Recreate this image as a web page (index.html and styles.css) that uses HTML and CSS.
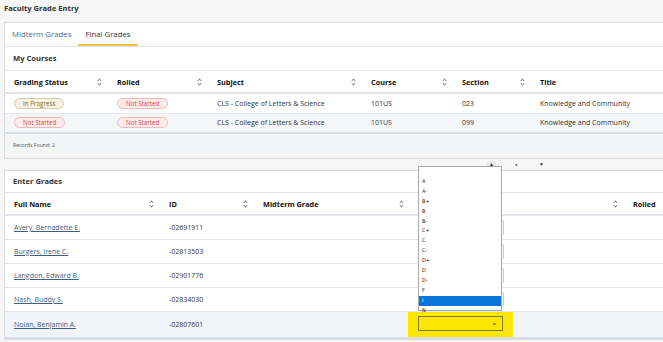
FILE: index.html
```html
<!DOCTYPE html>
<html lang="en">
  <head>
    <meta charset="UTF-8" />
    <meta name="viewport" content="width=device-width, initial-scale=1.0" />
    <title>Faculty Grade Entry</title>
    <link rel="stylesheet" href="styles.css">
  </head>
  <body>
    <div class="page">
      <h1 class="page-title">Faculty Grade Entry</h1>

      <div class="panel">
        <div class="tabs">
          <div class="tab">Midterm Grades</div>
          <div class="tab active">Final Grades</div>
        </div>

        <div class="panel-title">My Courses</div>

        <table class="grid courses">
          <colgroup>
            <col style="width: 103px" />
            <col style="width: 100px" />
            <col style="width: 154px" />
            <col style="width: 91px" />
            <col style="width: 78px" />
            <col />
          </colgroup>
          <thead>
            <tr>
              <th><span>Grading Status</span><i class="sort"></i></th>
              <th><span>Rolled</span><i class="sort"></i></th>
              <th><span>Subject</span><i class="sort"></i></th>
              <th><span>Course</span><i class="sort"></i></th>
              <th><span>Section</span><i class="sort"></i></th>
              <th><span>Title</span></th>
            </tr>
          </thead>
          <tbody>
            <tr>
              <td><span class="pill progress">In Progress</span></td>
              <td><span class="pill not-started">Not Started</span></td>
              <td>CLS - College of Letters &amp; Science</td>
              <td>101US</td>
              <td>023</td>
              <td>Knowledge and Community</td>
            </tr>
            <tr class="alt">
              <td><span class="pill not-started">Not Started</span></td>
              <td><span class="pill not-started">Not Started</span></td>
              <td>CLS - College of Letters &amp; Science</td>
              <td>101US</td>
              <td>099</td>
              <td>Knowledge and Community</td>
            </tr>
          </tbody>
        </table>

        <div class="records">Records Found: 2</div>
      </div>

      <div class="pager">
        <span class="pager-up">&#9650;</span>
        <span class="pager-dot">&#9679;</span>
        <span class="pager-down">&#9660;</span>
      </div>

      <div class="panel">
        <div class="panel-title short">Enter Grades</div>

        <table class="grid students">
          <colgroup>
            <col style="width: 155px" />
            <col style="width: 94px" />
            <col style="width: 156px" />
            <col style="width: 214px" />
            <col />
          </colgroup>
          <thead>
            <tr>
              <th><span>Full Name</span><i class="sort"></i></th>
              <th><span>ID</span><i class="sort"></i></th>
              <th><span>Midterm Grade</span><i class="sort"></i></th>
              <th><i class="sort"></i></th>
              <th><span>Rolled</span></th>
            </tr>
          </thead>
          <tbody>
            <tr>
              <td><a href="#">Avery, Bernadette E.</a></td>
              <td>-02691911</td>
              <td></td>
              <td><div class="grade-select"></div></td>
              <td></td>
            </tr>
            <tr>
              <td><a href="#">Burgers, Irene C.</a></td>
              <td>-02813503</td>
              <td></td>
              <td><div class="grade-select"></div></td>
              <td></td>
            </tr>
            <tr>
              <td><a href="#">Langdon, Edward B.</a></td>
              <td>-02901776</td>
              <td></td>
              <td><div class="grade-select"></div></td>
              <td></td>
            </tr>
            <tr>
              <td><a href="#">Nash, Buddy S.</a></td>
              <td>-02834030</td>
              <td></td>
              <td><div class="grade-select"></div></td>
              <td></td>
            </tr>
            <tr class="current">
              <td><a href="#">Nolan, Benjamin A.</a></td>
              <td>-02807601</td>
              <td></td>
              <td class="highlight-cell">
                <div class="highlight">
                  <div class="grade-select open"><span class="chev">&#8964;</span></div>
                </div>
              </td>
              <td></td>
            </tr>
          </tbody>
        </table>
      </div>

      <ul class="listbox">
        <li>A</li>
        <li>A-</li>
        <li>B+</li>
        <li>B</li>
        <li>B-</li>
        <li>C+</li>
        <li>C</li>
        <li>C-</li>
        <li>D+</li>
        <li>D</li>
        <li>D-</li>
        <li>F</li>
        <li class="selected">I</li>
        <li>N</li>
      </ul>
    </div>
  </body>
</html>
```

FILE: styles.css
```css
* {
  margin: 0;
  padding: 0;
  box-sizing: border-box;
}

html,
body {
  overflow: hidden;
}

body {
  font-family: 'Open Sans', 'Liberation Sans', sans-serif;
  font-size: 7px;
  color: #333;
  background: #f6f6f6;
}

.page {
  position: relative;
  width: 740px;
  padding: 0 0 0 4px;
}

.page-title {
  font-size: 7.6px;
  font-weight: 700;
  color: #333;
  height: 22px;
  line-height: 17px;
}

.panel {
  background: white;
  border: 1px solid #dcdcdc;
}

.tabs {
  display: flex;
  height: 24px;
  border-bottom: 1px solid #e4e4e4;
}

.tab {
  padding: 0 7px;
  line-height: 23px;
  font-size: 7.8px;
  color: #4d6a86;
}

.tab.active {
  color: #333;
  border-bottom: 2px solid #f0c34a;
}

.panel-title {
  height: 24px;
  line-height: 23px;
  padding-left: 8px;
  font-weight: 700;
  font-size: 7.6px;
  color: #333;
  border-bottom: 1px solid #e2e6ea;
}

.panel-title.short {
  height: 22px;
  line-height: 21px;
}

.grid {
  width: 100%;
  table-layout: fixed;
  border-collapse: collapse;
}

.grid th {
  text-align: left;
  font-weight: 700;
  font-size: 7.3px;
  color: #111;
  padding: 0 6px 0 9px;
  border-bottom: 2px solid #e2e6ee;
}

.grid th span {
  display: inline-block;
}

.grid td {
  padding: 0 6px 0 9px;
  color: #333;
  border-bottom: 1px solid #e2e6ee;
  white-space: nowrap;
}

.courses th {
  height: 22px;
}

.courses td {
  height: 20px;
}

.courses tbody tr:last-child td {
  border-bottom: 2px solid #d8dce4;
}

.grid tr.alt td {
  background: #f4f6f8;
}

.sort {
  float: right;
  position: relative;
  width: 5px;
  height: 8px;
  margin-top: 1px;
}

.sort::before,
.sort::after {
  content: '';
  position: absolute;
  left: 1px;
  width: 2px;
  height: 2px;
  border-left: 1px solid #8a8a8a;
  border-top: 1px solid #8a8a8a;
}

.sort::before {
  top: 1px;
  transform: rotate(45deg);
}

.sort::after {
  bottom: 1px;
  transform: rotate(-135deg);
}

.pill {
  display: inline-block;
  padding: 0 8px;
  height: 11px;
  line-height: 9px;
  border-radius: 6px;
  font-size: 6.2px;
  border: 1px solid;
}

.pill.progress {
  background: #f6f1e2;
  border-color: #d6cba8;
  color: #7d6b2e;
}

.pill.not-started {
  background: #fdeaea;
  border-color: #f4b8b8;
  color: #d24a4a;
}

.records {
  height: 24px;
  line-height: 22px;
  padding-left: 8px;
  font-size: 5.2px;
  color: #555;
  background: #f4f5f6;
}

.pager {
  height: 11px;
  position: relative;
  font-size: 5px;
  color: #333;
}

.pager span {
  position: absolute;
  top: 2px;
}

.pager-up {
  left: 483px;
  background: #e9e9e9;
  padding: 0 2px;
}

.pager-dot {
  left: 511px;
  font-size: 4px;
  margin-top: 1px;
}

.pager-down {
  left: 535px;
}

.students th {
  height: 22px;
}

.students td {
  height: 24px;
}

.students a {
  color: #3b5f86;
  text-decoration: underline;
}

.students tr.current td {
  background: #f1f5fa;
  border-bottom: 2px solid #d8dce4;
}

.students td.highlight-cell {
  padding: 0;
}

.grade-select {
  width: 85px;
  height: 15px;
  border: 1px solid #c8c8c8;
  border-radius: 2px;
  background: white;
}

.highlight {
  display: inline-block;
  vertical-align: middle;
  margin-left: -2px;
  padding: 4px 10px 6px;
  background: #fde700;
}

.grade-select.open {
  position: relative;
  background: #fde700;
  border-color: #7f7d2a;
  border-radius: 0;
}

.chev {
  position: absolute;
  right: 4px;
  top: -1px;
  font-size: 8px;
  color: #444;
}

.listbox {
  position: absolute;
  left: 418px;
  top: 166px;
  width: 84px;
  height: 145px;
  list-style: none;
  background: white;
  border: 1px solid #a8a8a8;
  padding-top: 10px;
  font-family: 'DejaVu Sans', sans-serif;
  font-size: 5px;
  color: #222;
}

.listbox li {
  height: 9.9px;
  line-height: 9.9px;
  padding-left: 3px;
}

.listbox li.selected {
  background: #0a74d8;
  color: white;
}
```
